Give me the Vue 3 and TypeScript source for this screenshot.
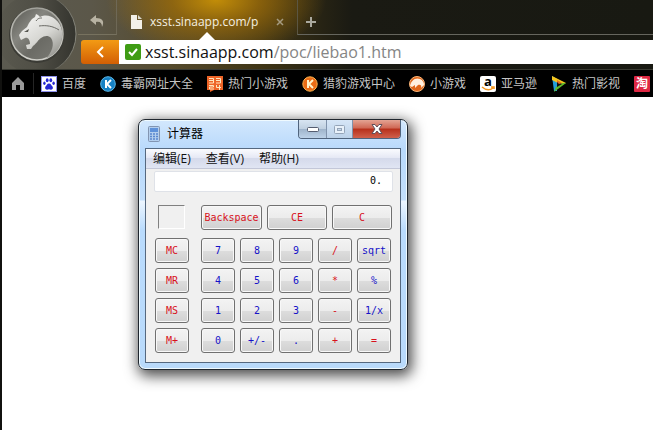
<script setup lang="ts">
import { ref } from 'vue'

interface Key {
  label: string
  kind: 'red' | 'blue'
}

const host = 'xsst.sinaapp.com'
const path = '/poc/liebao1.htm'
const display = ref('0.')

const key = (label: string, kind: Key['kind']): Key => ({ label, kind })

const wideKeys: Key[] = [key('Backspace', 'red'), key('CE', 'red'), key('C', 'red')]

const rows: Key[][] = [
  [key('MC', 'red'), key('7', 'blue'), key('8', 'blue'), key('9', 'blue'), key('/', 'red'), key('sqrt', 'blue')],
  [key('MR', 'red'), key('4', 'blue'), key('5', 'blue'), key('6', 'blue'), key('*', 'red'), key('%', 'blue')],
  [key('MS', 'red'), key('1', 'blue'), key('2', 'blue'), key('3', 'blue'), key('-', 'red'), key('1/x', 'blue')],
  [key('M+', 'red'), key('0', 'blue'), key('+/-', 'blue'), key('.', 'blue'), key('+', 'red'), key('=', 'red')],
]

const menus = ['编辑(E)', '查看(V)', '帮助(H)']
</script>

<template>
  <div class="browser">
    <header class="chrome">
      <a class="brand" href="#" aria-label="猎豹浏览器">
        <svg viewBox="0 0 76 70" width="76" height="70">
          <defs>
            <linearGradient id="disc" x1="0" y1="0" x2="1" y2="1">
              <stop offset="0" stop-color="#55554f" />
              <stop offset="0.35" stop-color="#85857f" />
              <stop offset="0.6" stop-color="#6b6b65" />
              <stop offset="1" stop-color="#7d7d77" />
            </linearGradient>
            <linearGradient id="rim" x1="0" y1="0" x2="0" y2="1">
              <stop offset="0" stop-color="#a3a39c" />
              <stop offset="1" stop-color="#d0d0ca" />
            </linearGradient>
            <linearGradient id="well" x1="0" y1="0" x2="1" y2="0">
              <stop offset="0" stop-color="#5a594f" />
              <stop offset="0.5" stop-color="#504f46" />
              <stop offset="1" stop-color="#34342e" />
            </linearGradient>
            <linearGradient id="well-edge" x1="0" y1="0" x2="1" y2="0">
              <stop offset="0.5" stop-color="#6e6e66" stop-opacity="0" />
              <stop offset="1" stop-color="#85857b" />
            </linearGradient>
            <linearGradient id="cat" x1="0.2" y1="0" x2="0.9" y2="1">
              <stop offset="0" stop-color="#f4f4f2" />
              <stop offset="0.5" stop-color="#d6d6d2" />
              <stop offset="1" stop-color="#8a8a84" />
            </linearGradient>
          </defs>
          <circle cx="34" cy="34" r="40" fill="url(#well)" stroke="url(#well-edge)" />
          <circle cx="35" cy="35" r="28" fill="#3b3b35" />
          <circle cx="35" cy="34" r="26" fill="url(#disc)" stroke="url(#rim)" stroke-width="1.500" />
          <path d="M17 35 L20 31 L25 27 L27 23 L30 19 L33 17 L34 14 L36 15 L38 17 C44 14 49 16 53 19 C57 22 59 26 60 31 C61 39 58 49 52 54 L44 59 C50 52 53 44 49 38 C46 35 42 36 39 38 C36 40 35 43 31 46 L29 49 L25 49 L24 45 L28 44 C28 40 26 37 23 38 L19 40 L18 38 Z" fill="url(#cat)" />
          <path d="M22 32 L27 29 L26 32 Z" fill="#55554f" />
          <path d="M37 26 C44 25 51 26 57 30 M34 21 C36 18 38 18 40 18" fill="none" stroke="#6b6b66" />
        </svg>
      </a>
      <div class="lines">
        <div class="tabs">
          <button class="undo" aria-label="恢复标签页">
            <svg viewBox="0 0 14 13" width="14" height="13"><path d="M6 0 L0 5 L6 10 V7 C10 6 12 8 12 12 C15 6 12 3 6 3 Z" fill="#b8b3a3" /></svg>
          </button>
          <div class="tab">
            <svg viewBox="0 0 12 14" width="12" height="14"><path d="M1 0 H7 V5 H12 V14 H1 Z" fill="#f3f0e8" /><path d="M8 0 L12 4 H8 Z" fill="#dcd8cc" /></svg>
            <span class="tab-title">xsst.sinaapp.com/p</span>
            <button class="tab-close" aria-label="关闭标签页">
              <svg viewBox="0 0 8 8" width="8" height="8"><path d="M1 1 L7 7 M7 1 L1 7" stroke="#a59b80" stroke-width="1.500" /></svg>
            </button>
          </div>
          <button class="tab-new" aria-label="新标签页">
            <svg viewBox="0 0 10 10" width="10" height="10"><path d="M5 0 V10 M0 5 H10" stroke="#aaa99f" stroke-width="2" /></svg>
          </button>
        </div>
        <div class="address-row">
          <button class="back" aria-label="后退">
            <svg viewBox="0 0 8 12" width="8" height="12"><path d="M7 1 L2 6 L7 11" fill="none" stroke="#fff" stroke-width="2" /></svg>
          </button>
          <div class="address">
            <svg viewBox="0 0 16 16" width="16" height="16"><rect width="16" height="16" rx="2" fill="#3f9c14" /><path d="M4 8 L7 11 L12 5" fill="none" stroke="#fff" stroke-width="2" /></svg>
            <a class="url" href="#"><span class="host">{{ host }}</span>{{ path }}</a>
          </div>
        </div>
      </div>
    </header>

    <nav class="bookmarks" aria-label="收藏">
      <a class="home" href="#" aria-label="主页">
        <svg viewBox="0 0 14 13" width="14" height="13"><path d="M7 0 L13 6 V13 H9 V8 H5 V13 H1 V6 Z" fill="#9a9a9a" /></svg>
      </a>
      <a href="#" class="mark baidu">
        <svg viewBox="0 0 16 16" width="16" height="16">
          <rect width="16" height="16" fill="#fff" /><rect x="0.5" y="0.5" width="15" height="15" fill="none" stroke="#8f91ee" />
          <g fill="#2527d4"><ellipse cx="6.200" cy="4.200" rx="1.400" ry="2" /><ellipse cx="9.800" cy="4.200" rx="1.400" ry="2" /><ellipse cx="3.400" cy="7.300" rx="1.200" ry="1.700" /><ellipse cx="12.600" cy="7.300" rx="1.200" ry="1.700" /><path d="M8 7.500 C10 7.500 10 9 11.500 10.500 C13 13 10.500 14.500 8 13.300 C5.500 14.500 3 13 4.500 10.500 C6 9 6 7.500 8 7.500 Z" /></g>
        </svg>
        <span>百度</span>
      </a>
      <a href="#" class="mark">
        <svg viewBox="0 0 16 16" width="16" height="16"><circle cx="8" cy="8" r="7.300" fill="#1681c4" stroke="#5bb8ea" /><path d="M6 4 V12 M11 4 L7 8 L11 12" fill="none" stroke="#fff" stroke-width="2" /></svg>
        <span>毒霸网址大全</span>
      </a>
      <a href="#" class="mark">
        <svg viewBox="0 0 16 16" width="16" height="16"><path d="M0 0 H16 V14 H7 L3 16 V14 H0 Z" fill="#ee6427" /><path d="M2 2.500 H6.500 V7 M2 4.500 H6.500 M2 7 H6.500 M9 2.500 H13.500 V7 M9 4.500 H13.500 M9 7 H13.500 M2 9.500 H6.500 V11 H2.500 V13 H7 M9.500 9 V11.500 H14 M12.500 9 V14" fill="none" stroke="#ffe6be" /></svg>
        <span>热门小游戏</span>
      </a>
      <a href="#" class="mark">
        <svg viewBox="0 0 16 16" width="16" height="16"><circle cx="8" cy="8" r="7.200" fill="#e96b16" stroke="#ffb44d" /><path d="M6 4 V12 M11 4 L7 8 L11 12" fill="none" stroke="#fff3ca" stroke-width="2" /></svg>
        <span>猎豹游戏中心</span>
      </a>
      <a href="#" class="mark">
        <svg viewBox="0 0 16 16" width="16" height="16"><circle cx="8" cy="8" r="7.500" fill="#e0661a" stroke="#f9b579" /><path d="M1 10 C2 5 6 1 11 3 C14 4 15 7 15 9 L12 12 C13 9 11 8 9 9 L6 12 L6 9 L3 11 Z" fill="#fff0df" /></svg>
        <span>小游戏</span>
      </a>
      <a href="#" class="mark">
        <svg viewBox="0 0 16 16" width="16" height="16"><rect width="16" height="16" rx="2" fill="#fff" /><text class="amazon-a" x="8" y="10" text-anchor="middle">a</text><path d="M2 11 Q8 16 13 12 M11 11 H14 V13" fill="none" stroke="#f4961d" stroke-width="1.500" /></svg>
        <span>亚马逊</span>
      </a>
      <a href="#" class="mark">
        <svg viewBox="0 0 16 16" width="16" height="16"><path d="M1 0 L6 3 V15 L3 15 Z" fill="#239ed8" /><path d="M1 0 L15 7 L11 9 L1 4 Z" fill="#f5c51d" /><path d="M15 7 L3 16 L5 11 L11 7 Z" fill="#61b928" /><path d="M6 5 L11 8 L6 11 Z" fill="#101010" /><path d="M6 4 L11 7 L8 8 L6 6 Z" fill="#ed6c1b" /></svg>
        <span>热门影视</span>
      </a>
      <a href="#" class="mark" aria-label="淘宝"><span class="tao">淘</span></a>
    </nav>

    <main class="page">
      <section class="window" aria-label="计算器">
        <div class="titlebar">
          <svg viewBox="0 0 12 16" width="12" height="16"><rect x="0.5" y="0.5" width="11" height="15" rx="1" fill="#b4cfee" stroke="#8295b2" /><rect x="2" y="2" width="8" height="4" fill="#5f92da" /><path d="M2 8 H10 M2 10.500 H10 M2 13 H10" stroke="#5a88cf" stroke-width="1.500" stroke-dasharray="2 1" /></svg>
          <h1>计算器</h1>
          <div class="controls">
            <button class="ctl" aria-label="最小化"><svg viewBox="0 0 12 5" width="12" height="5"><rect x="0.5" y="0.5" width="11" height="4" rx="1" fill="#fff" stroke="#555d70" /></svg></button>
            <button class="ctl max" aria-label="最大化" disabled><svg viewBox="0 0 11 9" width="11" height="9"><rect x="0.5" y="0.5" width="10" height="8" rx="1" fill="#e8f1fa" stroke="#94a4b8" /><rect x="3.500" y="3.500" width="4" height="2" fill="#c9d9ea" stroke="#94a4b8" /></svg></button>
            <button class="ctl close" aria-label="关闭"><svg viewBox="0 0 12 10" width="12" height="10"><path d="M1 .5 H4 L6 3 L8 .5 H11 L8 5 L11 9.500 H8 L6 7 L4 9.500 H1 L4 5 Z" fill="#fff" stroke="#61505a" /></svg></button>
          </div>
        </div>
        <div class="client">
          <div class="menubar">
            <button v-for="m in menus" :key="m">{{ m }}</button>
          </div>
          <div class="body">
            <input v-model="display" class="display" type="text" aria-label="结果" readonly />
            <div class="top-keys">
              <div class="memory"></div>
              <div class="wide">
                <button v-for="k in wideKeys" :key="k.label" class="key" :class="k.kind">{{ k.label }}</button>
              </div>
            </div>
            <div class="keys">
              <div v-for="(r, i) in rows" :key="i" class="key-row">
                <button v-for="k in r" :key="k.label" class="key" :class="k.kind">{{ k.label }}</button>
              </div>
            </div>
          </div>
        </div>
      </section>
    </main>
  </div>
</template>

<style>
body {
  background: #fff;
}
</style>

<style scoped>
.browser {
  box-sizing: border-box;
  min-height: 100vh;
  border-left: 2px solid #11110f;
  overflow: hidden;
  font: 12px/16px "Open Sans", "Noto Sans CJK SC", sans-serif;
  display: flex;
  flex-direction: column;
}
button {
  border: 0;
  padding: 0;
  margin: 0;
  background: none;
  font: inherit;
  color: inherit;
}
svg {
  display: block;
  flex: none;
  overflow: visible;
}
a {
  color: inherit;
  text-decoration: none;
}
.chrome {
  display: flex;
  height: 69px;
  overflow: hidden;
  border-bottom: 1px solid #393a32;
  background:
    radial-gradient(ellipse 110px 56px at 214px 0, #c28d08 0%, rgba(160, 110, 8, 0.75) 40%, rgba(90, 65, 15, 0) 100%),
    linear-gradient(90deg, #5b5a50 0, #5b5749 90px, #554a2c 170px, #3f3516 260px, #1a1a13 350px, #181912 100%);
}
.brand {
  flex: none;
  width: 76px;
}
.lines {
  flex: 1;
  min-width: 0;
}
.tabs {
  display: flex;
  height: 35px;
}
.undo {
  width: 39px;
  display: flex;
  align-items: center;
  justify-content: center;
  padding-top: 8px;
  border-right: 1px solid #6e6856;
  border-bottom: 1px solid #77725f;
}
.tab {
  width: 180px;
  display: flex;
  align-items: center;
  gap: 8px;
  padding: 8px 13px 0 13px;
  box-sizing: border-box;
  color: #f4f0e4;
}
.tab-title {
  flex: 1;
  white-space: nowrap;
}
.tab-new {
  flex: 1;
  display: flex;
  align-items: center;
  padding: 10px 0 0 8px;
  border-left: 1px solid #5b5643;
  border-bottom: 1px solid #66665e;
}
.address-row {
  display: flex;
  height: 24px;
  margin: 5px 0 0 3px;
}
.back {
  width: 38px;
  display: flex;
  align-items: center;
  justify-content: center;
  border-radius: 3px 0 0 3px;
  background: linear-gradient(#f39b14, #d35f04);
}
.address {
  position: relative;
  flex: 1;
  display: flex;
  align-items: center;
  gap: 4px;
  padding-left: 6px;
  background: #fff;
}
.address::before {
  content: "";
  position: absolute;
  left: 80px;
  top: -8px;
  border: 8px solid transparent;
  border-top: 0;
  border-bottom-color: #fff;
}
.url {
  font-size: 16px;
  line-height: 24px;
  color: #858585;
  white-space: nowrap;
}
.host {
  color: #111;
}
.bookmarks {
  display: flex;
  align-items: center;
  height: 27px;
  background: #000;
  color: #c4c4c4;
  overflow: hidden;
  white-space: nowrap;
}
.home {
  padding: 4px 8px 4px 9px;
  border-right: 1px solid #252525;
  flex: none;
}
.mark {
  flex: none;
  display: flex;
  align-items: center;
  gap: 5px;
  margin-left: 14px;
}
.baidu {
  margin-left: 7px;
}
.amazon-a {
  font: 700 13px/14px "Open Sans", sans-serif;
}
.tao {
  width: 16px;
  background: #df2844;
  color: #fff;
  border-radius: 1px;
  font-weight: 700;
  text-align: center;
}
.page {
  flex: 1;
  background: #fff;
  padding: 22px 0 60px 136px;
}
.window {
  box-sizing: border-box;
  width: 270px;
  padding: 0 6px 6px;
  border: 1px solid #20272f;
  border-radius: 7px;
  background: linear-gradient(#d3e8fd 0, #b8d9fb 30px, #c3dffc 80px, #edf6ff 81px, #b9dbfd 110px, #b9dafb 100%);
  box-shadow: inset 0 0 0 1px #effaff, 2px 4px 14px 2px rgba(0, 0, 0, 0.7);
}
.titlebar {
  display: flex;
  height: 28px;
  padding-left: 3px;
  align-items: center;
  gap: 7px;
}
h1 {
  flex: 1;
  margin: 0;
  font-size: 12px;
  font-weight: 400;
  color: #000;
}
.controls {
  display: flex;
  align-self: flex-start;
  border: 1px solid #50647d;
  border-top: 0;
  border-radius: 0 0 4px 4px;
  overflow: hidden;
}
.ctl {
  width: 28px;
  height: 18px;
  display: flex;
  align-items: center;
  justify-content: center;
  border-right: 1px solid #8093ac;
  background: linear-gradient(#d8e5f2 0, #c0d0e1 48%, #9eb3ca 50%, #bdd2e8 100%);
}
.max {
  width: 26px;
  background: linear-gradient(#d6e6f7, #bbd1e8);
}
.close {
  width: 47px;
  border-right: 0;
  background: linear-gradient(#e4a494 0, #cf6754 45%, #b7301b 50%, #d0604c 100%);
}
.client {
  border: 1px solid #55687f;
  background: #f0f0f0;
}
.menubar {
  display: flex;
  gap: 15px;
  height: 19px;
  padding-left: 7px;
  color: #111;
  border-bottom: 1px solid #c3c7d8;
  background: linear-gradient(#fafbfe 0, #e6e9f5 45%, #d5daeb 50%, #e0e5f3 100%);
}
.body {
  padding: 2px 7px 9px 8px;
}
.display {
  display: block;
  box-sizing: border-box;
  width: 100%;
  height: 21px;
  border: 1px solid #dfe2e8;
  border-radius: 2px;
  padding: 0 10px 2px;
  background: #fff;
  color: #000;
  text-align: right;
  font: 10px/16px "DejaVu Sans Mono", monospace;
}
.top-keys {
  display: flex;
  justify-content: space-between;
  margin: 13px 1px 8px 4px;
}
.memory {
  box-sizing: border-box;
  width: 27px;
  height: 24px;
  border: 1px solid #808080;
  border-right-color: #fff;
  border-bottom-color: #fff;
}
.wide {
  display: grid;
  grid-template-columns: 61px 60px 60px;
  gap: 5px;
}
.key {
  box-sizing: border-box;
  height: 25px;
  border: 1px solid #707070;
  border-radius: 3px;
  background: linear-gradient(#f3f3f3 0, #ececec 50%, #dddddd 51%, #d0d0d0 100%);
  box-shadow: inset 0 0 0 1px #f8f8f8;
  font: 10px/16px "DejaVu Sans Mono", monospace;
  text-align: center;
}
.red {
  color: #d8121c;
}
.blue {
  color: #1512c8;
}
.keys {
  display: grid;
  gap: 5px;
  padding-left: 1px;
}
.key-row {
  display: grid;
  grid-template-columns: 41px repeat(5, 34px);
  column-gap: 5px;
}
.key-row .key {
  width: 34px;
}
</style>
